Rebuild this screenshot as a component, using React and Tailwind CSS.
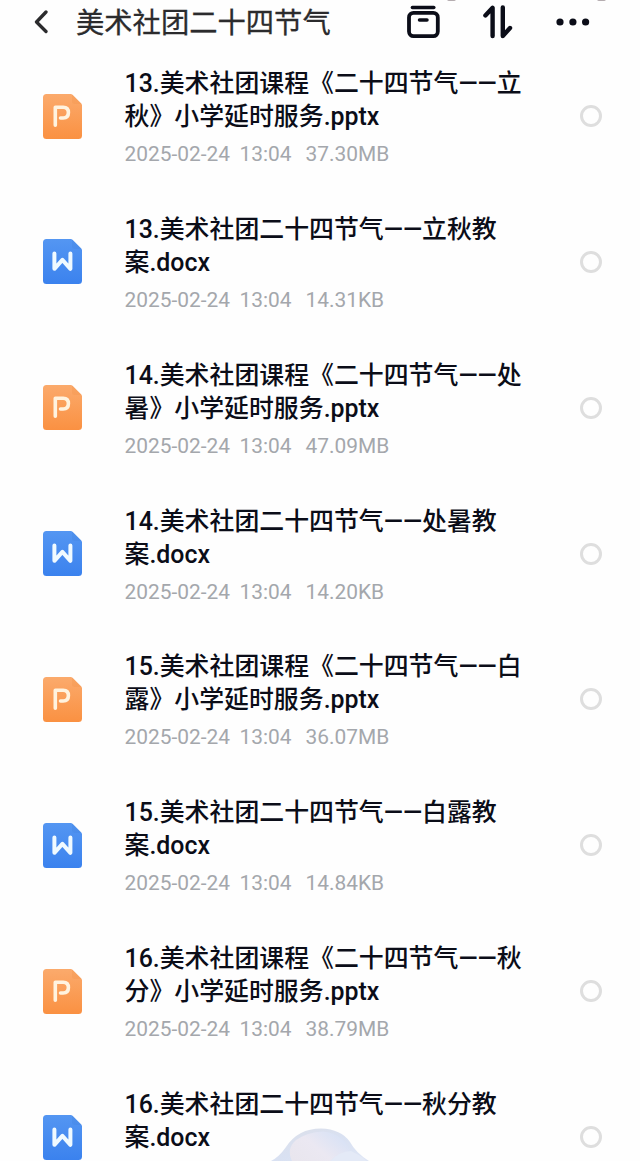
const archivos = [
    { nombre: '13.美术社团课程《二十四节气——立秋》小学延时服务.pptx', tipo: 'ppt', peso: '37.30MB' },
    { nombre: '13.美术社团二十四节气——立秋教案.docx', tipo: 'word', peso: '14.31KB' },
    { nombre: '14.美术社团课程《二十四节气——处暑》小学延时服务.pptx', tipo: 'ppt', peso: '47.09MB' },
    { nombre: '14.美术社团二十四节气——处暑教案.docx', tipo: 'word', peso: '14.20KB' },
    { nombre: '15.美术社团课程《二十四节气——白露》小学延时服务.pptx', tipo: 'ppt', peso: '36.07MB' },
    { nombre: '15.美术社团二十四节气——白露教案.docx', tipo: 'word', peso: '14.84KB' },
    { nombre: '16.美术社团课程《二十四节气——秋分》小学延时服务.pptx', tipo: 'ppt', peso: '38.79MB' },
    { nombre: '16.美术社团二十四节气——秋分教案.docx', tipo: 'word', peso: null },
];

function IconoArchivo({ tipo }) {
    const id = `fondo-${tipo}`;
    const esPpt = tipo === 'ppt';

    return (
        <svg className="w-[39px] h-[45px] shrink-0" viewBox="0 0 39 45" fill="none">
            <defs>
                <linearGradient id={id} x1="0" y1="0" x2="0" y2="1">
                    <stop offset="0" stopColor={esPpt ? '#fbaa6c' : '#5496f2'} />
                    <stop offset="1" stopColor={esPpt ? '#fa9142' : '#3b82ee'} />
                </linearGradient>
            </defs>
            <path d="M3.5 0H27.5Q28.8 0 29.8 1L38 9.2Q39 10.2 39 11.5V41.5Q39 45 35.5 45H3.5Q0 45 0 41.5V3.5Q0 0 3.5 0Z" fill={`url(#${id})`} />
            {/* esquina doblada */}
            <path d="M29 .4L38.6 10H32Q29 10 29 7Z" fill={esPpt ? '#f18e45' : '#3f7fdd'} opacity=".25" />
            {esPpt ? (
                <path d="M12.3 31.2V13.2H20.2Q25.4 13.2 25.4 18.6Q25.4 24 20.2 24H17.5" stroke="#fff3df" strokeWidth="3.6" strokeLinecap="round" strokeLinejoin="round" />
            ) : (
                <path d="M11.4 14.6V29.8L19.4 20.8L27.4 29.8V14.6" stroke="#f0faff" strokeWidth="4" strokeLinecap="round" strokeLinejoin="round" />
            )}
        </svg>
    );
}

function FilaArchivo({ archivo }) {
    return (
        <li className="flex h-[145.86px] items-start pl-[43px] pr-[38px] pt-[20px]">
            <div className="flex h-[100px] items-center">
                <IconoArchivo tipo={archivo.tipo} />
            </div>
            <div className="ml-[42.5px] mt-[1px] w-[405px]">
                <h2 className="text-[24.9px] leading-[33px] font-medium text-[#0b0d18]">{archivo.nombre}</h2>
                {archivo.peso && (
                    <p className="mt-[5px] flex text-[20.9px] leading-[33px] text-[#a4a7ac]">
                        <span className="w-[115px]">2025-02-24</span>
                        <span className="w-[66px]">13:04</span>
                        <span>{archivo.peso}</span>
                    </p>
                )}
            </div>
            <div className="ml-auto flex h-[100px] items-center">
                <span className="w-[22px] h-[22px] rounded-full border-[3px] border-[#dedede]"></span>
            </div>
        </li>
    );
}

function Cabecera() {
    return (
        <header className="flex h-[46px] items-center pl-[34px] pr-[50px]">
            <svg className="w-[15px] h-[26px]" viewBox="0 0 15 26" fill="none" stroke="#2b2b2d" strokeWidth="3.3" strokeLinecap="round" strokeLinejoin="round">
                <path d="M12 2L2.5 12L12 21.5" />
            </svg>
            <h1 className="ml-[27px] pt-[2px] text-[28.3px] leading-[46px] text-[#2b2b2d] [-webkit-text-stroke:0.3px_#2b2b2d]">美术社团二十四节气</h1>
            <div className="ml-auto flex items-center">
                <svg className="w-[34px] h-[34px] overflow-visible" viewBox="0 0 34 34" fill="none" stroke="#0b0d18" strokeWidth="3.8" strokeLinecap="round" strokeLinejoin="round">
                    <path d="M5.4 1.4H26.8" strokeWidth="3.5" />
                    <rect x="2" y="6.9" width="28.8" height="23.2" rx="4.5" />
                    <path d="M12.5 14H20" strokeWidth="3.5" />
                </svg>
                <svg className="ml-[42px] w-[32px] h-[36px]" viewBox="0 0 32 36" fill="none" stroke="#0b0d18" strokeWidth="4.4" strokeLinecap="round" strokeLinejoin="round">
                    <path d="M2.4 10.5L9.6 2.8V31" />
                    <path d="M19.8 2.4V31L27 23" />
                </svg>
                <svg className="ml-[41px] w-[34px] h-[10px]" viewBox="0 0 34 10" fill="#0b0d18">
                    <circle cx="4" cy="4" r="3.6" />
                    <circle cx="16.9" cy="4" r="3.6" />
                    <circle cx="29.6" cy="4" r="3.6" />
                </svg>
            </div>
        </header>
    );
}

// burbuja del asistente, asoma por el borde inferior
function Burbuja() {
    return (
        <svg className="absolute bottom-0 left-[268px] w-[104px] h-[34px]" viewBox="0 0 104 34">
            <defs>
                <linearGradient id="burbuja" x1="0" y1="0" x2="1" y2="1">
                    <stop offset="0" stopColor="#dcdfe8" />
                    <stop offset=".5" stopColor="#d9e1f2" />
                    <stop offset="1" stopColor="#dfe6f5" />
                </linearGradient>
                <linearGradient id="brillo" x1="0" y1=".8" x2="1" y2=".2">
                    <stop offset="0" stopColor="#e9e6ee" />
                    <stop offset=".45" stopColor="#ebe8f2" />
                    <stop offset="1" stopColor="#d5e1f6" />
                </linearGradient>
            </defs>
            <path d="M3 34Q11 30 18 20Q30 1.5 53 1.5Q73 2 82 15Q88 26 101 34Z" fill="url(#burbuja)" />
            <path d="M24 34Q18 22 28 13Q39 5 55 4.5Q75 7 81 22L78 34Z" fill="url(#brillo)" />
            <path d="M62 34Q72 24 83 24Q92 28 99 34Z" fill="#e4eaf7" />
        </svg>
    );
}

export default function App() {
    return (
        <div className="relative h-[1161px] w-[640px] overflow-hidden bg-[#fefefe] font-['Roboto','Noto_Sans_CJK_SC',sans-serif]">
            <Cabecera />
            {/* restos de la barra de estado */}
            <span className="absolute -top-[3px] left-[447px] h-[4px] w-[9px] rounded-full bg-[#b5adb0]"></span>
            <span className="absolute -top-[3px] left-[597px] h-[4px] w-[9px] rounded-full bg-[#b5adb0]"></span>
            <ul>
                {archivos.map((archivo) => (
                    <FilaArchivo key={archivo.nombre} archivo={archivo} />
                ))}
            </ul>
            <Burbuja />
        </div>
    );
}
